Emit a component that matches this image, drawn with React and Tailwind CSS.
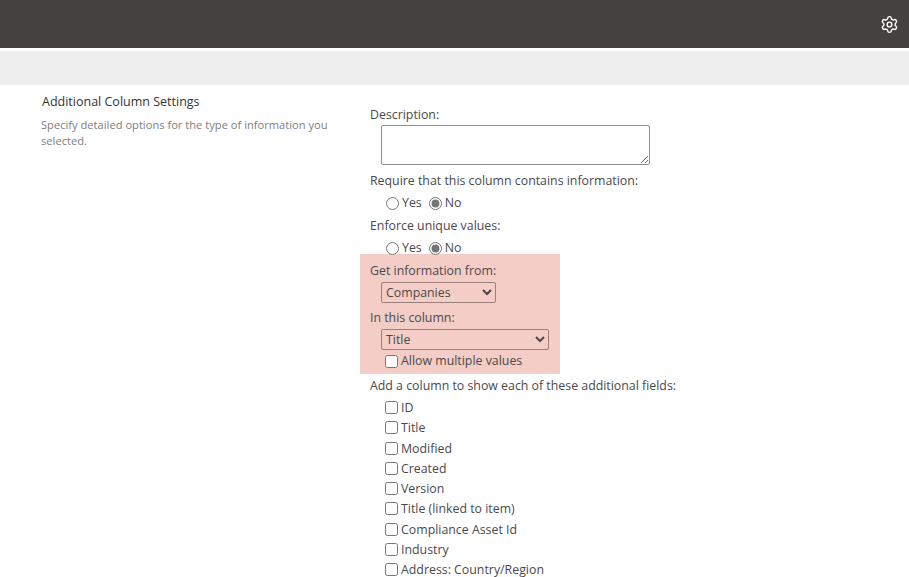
import { Settings } from "lucide-react";

const extraFields = [
  "ID",
  "Title",
  "Modified",
  "Created",
  "Version",
  "Title (linked to item)",
  "Compliance Asset Id",
  "Industry",
  "Address: Country/Region",
];

const Label = ({ children, className = "" }) => (
  <div className={`h-[22px] leading-[22px] whitespace-nowrap ${className}`}>{children}</div>
);

const YesNo = ({ name }) => (
  <div className="flex h-[22px] items-center pl-[16px]">
    <input type="radio" name={name} className="m-0 size-[13px] accent-[#757575]" />
    <span className="ml-[3px]">Yes</span>
    <input type="radio" name={name} defaultChecked className="m-0 ml-[7px] size-[13px] accent-[#757575]" />
    <span className="ml-[3px]">No</span>
  </div>
);

const CheckRow = ({ label }) => (
  <label className="flex h-[20.25px] items-center pl-[15px]">
    <input type="checkbox" className="m-0 mb-[1px] size-[13px] accent-[#757575]" />
    <span className="ml-[3px] leading-[20px]">{label}</span>
  </label>
);

export default function App() {
  return (
    <div className="h-[577px] w-[909px] overflow-hidden bg-white font-['Open_Sans','Noto_Sans',sans-serif] text-[12.35px] text-[#4a4a4a]">
      {/* Top bar */}
      <div className="flex h-[48px] items-center justify-end bg-[#44423f] pr-[10px]">
        <Settings size={19} strokeWidth={1.8} className="text-white" />
      </div>
      <div className="mt-[3px] h-[34px] bg-[#eeeeee]" />

      <div className="flex pt-[19px]">
        {/* Section description */}
        <div className="w-[360px] shrink-0 pl-[41px] pr-[20px]">
          <div className="mt-[-11px] pl-[1px] text-[12.5px] leading-[18px] text-[#333]">Additional Column Settings</div>
          <p className="mt-[6px] w-[295px] text-[11.15px] leading-[16px] text-[#808080]">
            Specify detailed options for the type of information you selected.
          </p>
        </div>

        {/* Form */}
        <div className="w-[300px]">
          <div className="pl-[10px]">
            <Label>Description:</Label>
            <textarea className="ml-[11px] mt-[-1px] block h-[40px] w-[269px] rounded-[2px] border border-[#8f8f8f] bg-white" />
            <Label className="mt-[5px]">Require that this column contains information:</Label>
            <YesNo name="required" />
            <Label className="mt-[1px]">Enforce unique values:</Label>
            <YesNo name="unique" />
          </div>

          {/* Highlighted lookup fields */}
          <div className="mt-[-5px] h-[120px] w-[200px] bg-[#f3cdc6] pl-[10px] pt-[6px]">
            <Label>Get information from:</Label>
            <select className="ml-[11px] block h-[21px] w-[115px] rounded-[2px] border border-[#9a7f7a] bg-transparent">
              <option>Companies</option>
            </select>
            <Label className="mt-[4px]">In this column:</Label>
            <select className="ml-[11px] block h-[21px] w-[168px] rounded-[2px] border border-[#9a7f7a] bg-transparent">
              <option>Title</option>
            </select>
            <label className="flex h-[22px] items-center pl-[15px]">
              <input type="checkbox" className="m-0 size-[13px]" />
              <span className="ml-[3px]">Allow multiple values</span>
            </label>
          </div>

          <div className="mt-[1px] pl-[10px]">
            <Label>Add a column to show each of these additional fields:</Label>
            <div className="pt-[1px]">
              {extraFields.map((field) => (
                <CheckRow key={field} label={field} />
              ))}
            </div>
          </div>
        </div>
      </div>
    </div>
  );
}
